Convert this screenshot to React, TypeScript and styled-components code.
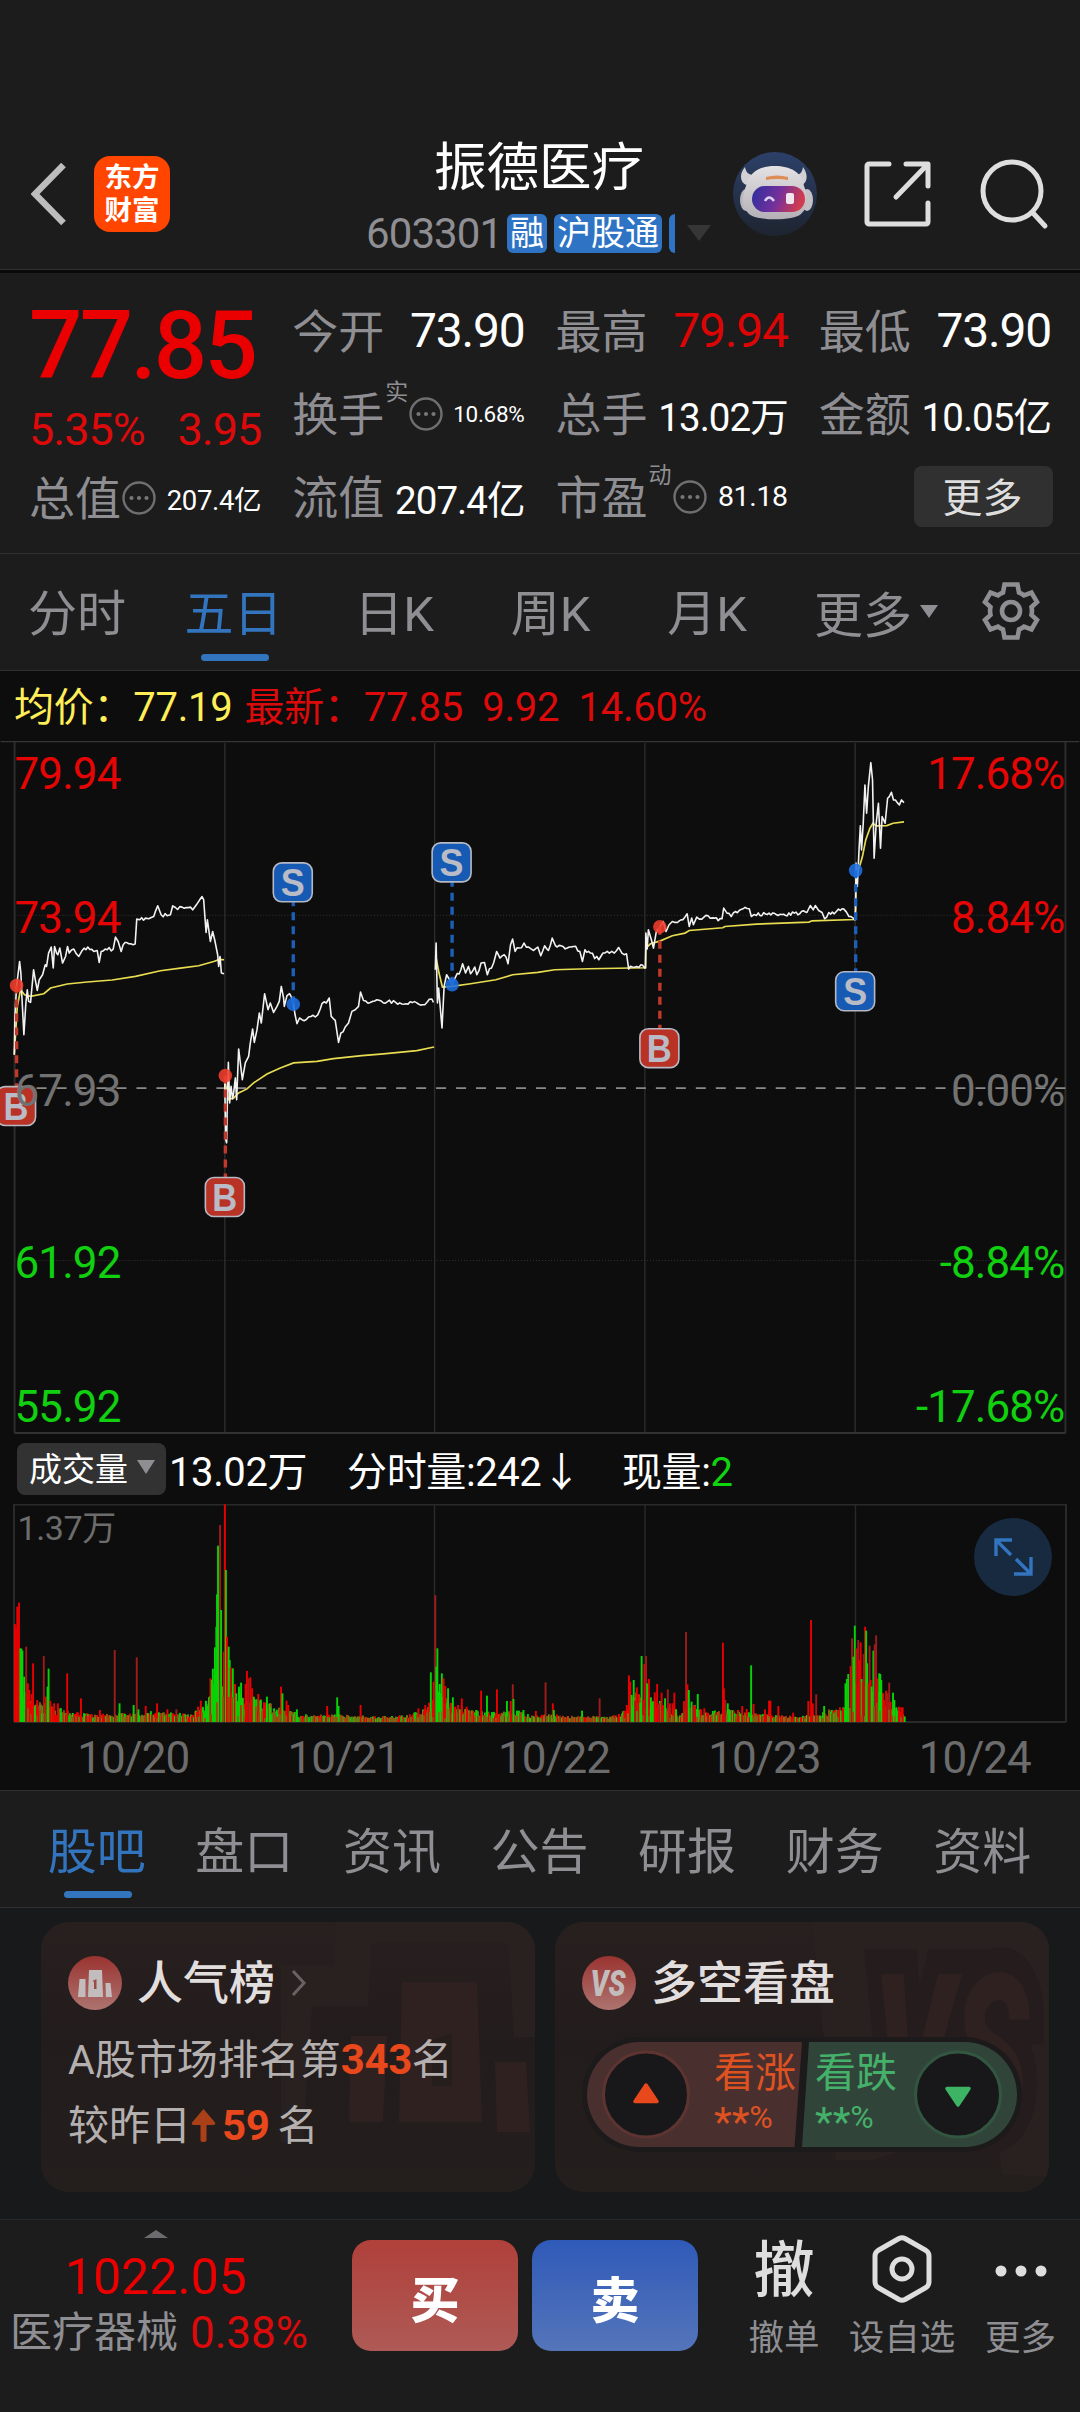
import React from 'react';
import styled, { createGlobalStyle } from 'styled-components';

const GlobalStyle = createGlobalStyle`
  * { box-sizing: border-box; }
  body { margin: 0; background: #1c1c1c; }
`;

const RED = '#ea0000';
const GREEN = '#0fd40f';
const GREY = '#8e8e93';
const BLUE = '#3274be';

const Page = styled.div`
  width: 1080px;
  height: 2412px;
  overflow: hidden;
  display: flex;
  flex-direction: column;
  background: #1c1c1c;
  font-family: Roboto, 'Noto Sans CJK SC', sans-serif;
  color: #fff;
  white-space: nowrap;
`;

/* ---------- header ---------- */

const Header = styled.header`
  height: 273px;
  padding-top: 118px;
  display: grid;
  grid-template-columns: 360px 360px 360px;
  border-bottom: 3px solid #0a0a0a;
  box-shadow: inset 0 -1px 0 #303030;
`;

const HeaderLeft = styled.div`
  display: flex;
  align-items: center;
  gap: 28px;
  height: 152px;
  padding-left: 31px;
`;

const HeaderRight = styled.div`
  display: flex;
  align-items: center;
  height: 152px;
  padding-left: 13px;
  gap: 47px;
`;

const AppLogo = styled.div`
  width: 76px;
  height: 76px;
  border-radius: 16px;
  background: #ff4500;
  display: flex;
  flex-direction: column;
  align-items: center;
  justify-content: center;
  font-size: 27.5px;
  font-weight: 700;
  line-height: 33px;
  padding-bottom: 1px;
`;

const HeaderCenter = styled.div`
  display: flex;
  flex-direction: column;
  align-items: center;
`;

const StockName = styled.div`
  font-size: 52.5px;
  line-height: 60px;
  margin: 20px 2px 0 0;
`;

const CodeRow = styled.div`
  display: flex;
  align-items: center;
  width: 348px;
  height: 40px;
  margin-top: 15px;
`;

const Code = styled.span`
  font-size: 42px;
  letter-spacing: -0.9px;
  color: ${GREY};
  width: 141px;
`;

const Tag = styled.span<{ $clip?: boolean }>`
  height: 39px;
  line-height: 38px;
  width: ${(p) => (p.$clip ? '6px' : 'auto')};
  padding: ${(p) => (p.$clip ? '0' : '0 3px')};
  border-radius: ${(p) => (p.$clip ? '6px 0 0 6px' : '6px')};
  margin-right: 7px;
  font-size: 34px;
  background: #2f74c4;
`;

const CodeCaret = styled.span`
  margin-left: 5px;
  border: 12px solid transparent;
  border-top: 16px solid #363636;
  border-bottom: 0;
`;

/* ---------- quote ---------- */

const Quote = styled.section`
  height: 281px;
  padding: 0 29px 0 29px;
  display: grid;
  grid-template-columns: repeat(4, minmax(0, 1fr));
  column-gap: 31px;
  border-bottom: 1px solid #303030;
`;

const QuoteCol = styled.div`
  display: flex;
  flex-direction: column;
  padding-top: 16px;
`;

const BigPrice = styled.div`
  height: 114px;
  line-height: 114px;
  font-size: 94px;
  font-weight: 500;
  letter-spacing: -2.7px;
  color: ${RED};
`;

const ChangeRow = styled.div`
  height: 52px;
  display: flex;
  justify-content: space-between;
  align-items: center;
  font-size: 45px;
  letter-spacing: -1px;
  color: #dc0a0a;
`;

const Cell = styled.div<{ $h?: number }>`
  height: ${(p) => p.$h ?? 83}px;
  display: flex;
  align-items: center;
`;

const Label = styled.span`
  font-size: 46px;
  padding-bottom: 6px;
  margin-right: 1px;
  color: ${GREY};
`;

const Sup = styled.sup`
  font-size: 23px;
  line-height: 24px;
  color: ${GREY};
  margin: 0 1px 41px 0;
  width: 23px;
`;

const Value = styled.span<{ $size: number; $color?: string }>`
  margin-left: auto;
  font-size: ${(p) => p.$size}px;
  letter-spacing: ${(p) => (p.$size > 30 ? '-0.025em' : '-0.012em')};
  color: ${(p) => p.$color ?? '#fff'};
`;

const MoreButton = styled.button`
  margin: 0 -2px 0 auto;
  width: 139px;
  height: 61px;
  border: 0;
  border-radius: 8px;
  background: #303030;
  color: #dedede;
  font: 40px Roboto, 'Noto Sans CJK SC', sans-serif;
  padding: 0 2px 4px 0;
`;

/* ---------- tab bars ---------- */

const PeriodBar = styled.nav`
  height: 117px;
  display: grid;
  grid-template-columns: 156px 157px 164px 149px 164px 290px;
  border-bottom: 1px solid #303030;
`;

const SectionBar = styled.nav`
  height: 118px;
  padding: 0 23px 0 24px;
  display: grid;
  grid-template-columns: repeat(7, 1fr);
  border-top: 1px solid #303030;
  border-bottom: 1px solid #303030;
`;

const TabItem = styled.div<{ $active?: boolean; $top: number }>`
  display: flex;
  flex-direction: column;
  align-items: center;
  padding-top: ${(p) => p.$top}px;
  font-size: 49px;
  line-height: 60px;
  color: ${(p) => (p.$active ? BLUE : GREY)};
  span { margin-right: 2px; }
  &::after {
    content: '';
    display: ${(p) => (p.$active ? 'block' : 'none')};
    width: 68px;
    height: 7px;
    margin-top: ${(p) => 40 - p.$top}px;
    border-radius: 4px;
    background: ${BLUE};
  }
`;

const MoreTab = styled.div`
  display: flex;
  align-items: center;
  padding: 0 0 2px 24px;
  font-size: 49px;
  color: ${GREY};
`;

const SmallCaret = styled.span<{ $up?: boolean; $w: number; $h: number; $color: string; $left?: number }>`
  margin-left: ${(p) => p.$left ?? 0}px;
  border: ${(p) => p.$w / 2}px solid transparent;
  border-top: ${(p) => (p.$up ? '0' : `${p.$h}px solid ${p.$color}`)};
  border-bottom: ${(p) => (p.$up ? `${p.$h}px solid ${p.$color}` : '0')};
`;

/* ---------- charts ---------- */

const ChartPanel = styled.section`
  height: 1119px;
  background: #0d0d0d;
  display: flex;
  flex-direction: column;
`;

const AvgRow = styled.div`
  height: 70px;
  padding: 0 0 3px 14px;
  display: flex;
  align-items: center;
  gap: 12px;
  font-size: 40px;
  letter-spacing: -0.25px;
  color: #dc0a0a;
  white-space: pre;
`;

const Avg = styled.span`
  color: #ffee58;
`;

const VolumeRow = styled.div`
  height: 70px;
  padding: 0 0 1px 17px;
  display: flex;
  align-items: center;
  font-size: 40px;
`;

const IndicatorButton = styled.div`
  width: 149px;
  height: 52px;
  margin-right: 3px;
  padding: 0 11px 3px 12px;
  border-radius: 8px;
  background: #323232;
  display: flex;
  align-items: center;
  justify-content: space-between;
  font-size: 33px;
`;

const Metric = styled.span<{ $gap: number }>`
  margin-left: ${(p) => p.$gap}px;
  letter-spacing: -0.4px;
  em { font-style: normal; color: ${GREEN}; }
`;

const VolumeBox = styled.div`
  position: relative;
  height: 220px;
`;

const ExpandButton = styled.div`
  position: absolute;
  left: 974px;
  top: 14px;
  width: 78px;
  height: 78px;
  border-radius: 50%;
  background: #172a40;
  display: grid;
  place-items: center;
`;

const Dates = styled.div`
  height: 66px;
  padding: 1px 0 0 28px;
  display: grid;
  grid-template-columns: repeat(5, 210.4px);
  align-items: center;
  text-align: center;
  font-size: 44px;
  letter-spacing: -1px;
  color: #6c6c6c;
`;

/* ---------- cards ---------- */

const Cards = styled.section`
  height: 311px;
  padding: 14px 31px 0 41px;
  display: flex;
  gap: 20px;
  background: #18191b;
`;

const Card = styled.article`
  position: relative;
  width: 494px;
  height: 270px;
  border-radius: 28px;
  overflow: hidden;
  background: linear-gradient(#28201f, #231c1c 45%, #241e1d);
`;

const Watermark = styled.svg`
  position: absolute;
  inset: 0;
`;

const CardBody = styled.div`
  position: relative;
  padding: 34px 27px 0;
`;

const CardTitle = styled.h3`
  margin: 0;
  height: 54px;
  display: flex;
  align-items: center;
  gap: 15px;
  font-size: 46px;
  font-weight: 500;
  line-height: 54px;
  color: #e2dede;
`;

const CardLine = styled.p<{ $top: number }>`
  margin: ${(p) => p.$top}px 0 0;
  height: 50px;
  display: flex;
  align-items: center;
  font-size: 41px;
  line-height: 50px;
  color: #b4b0b0;
`;

const Hot = styled.b<{ $after?: number }>`
  font-weight: 700;
  font-size: 42px;
  margin-right: ${(p) => p.$after ?? 0}px;
  letter-spacing: -0.4px;
  color: #e8481c;
`;

const Versus = styled.div`
  position: relative;
  width: 440px;
  height: 115px;
  margin-top: 27px;
`;

const VersusShape = styled.svg`
  position: absolute;
  inset: 0;
`;

const Votes = styled.div`
  position: relative;
  display: flex;
  gap: 19px;
  padding: 11px 0 0 132px;
`;

const Vote = styled.div<{ $color: string }>`
  width: 82px;
  color: ${(p) => p.$color};
  font-size: 41px;
  line-height: 50px;
`;

const Share = styled.div`
  display: flex;
  align-items: center;
  height: 38px;
  font-size: 32px;
  line-height: 38px;
`;

const Stars = styled.span`
  font-size: 41px;
  line-height: 38px;
  padding-top: 9px;
`;

/* ---------- bottom bar ---------- */

const BottomBar = styled.footer`
  height: 193px;
  display: flex;
  border-top: 1px solid #292a2d;
`;

const IndexBlock = styled.div`
  flex: none;
  width: 340px;
  padding: 10px 0 0 10px;
`;

const IndexTop = styled.div`
  width: 292px;
  display: flex;
  flex-direction: column;
  align-items: center;
  font-size: 50px;
  line-height: 60px;
  gap: 9px;
  color: ${RED};
`;

const IndexRow = styled.div`
  display: flex;
  gap: 12px;
  font-size: 42px;
  line-height: 52px;
  color: ${GREY};
  b { font-weight: 400; font-size: 44px; color: #dc0a0a; }
`;

const TradeButton = styled.div<{ $from: string; $to: string }>`
  flex: none;
  width: 166px;
  height: 111px;
  margin: 20px 14px 0 0;
  border-radius: 19px;
  background: linear-gradient(${(p) => p.$from}, ${(p) => p.$to});
  display: flex;
  align-items: center;
  justify-content: center;
  padding-top: 2px;
  font-size: 49px;
  font-weight: 900;
`;

const Action = styled.div<{ $w: number }>`
  flex: none;
  width: ${(p) => p.$w}px;
  display: flex;
  flex-direction: column;
  align-items: center;
  font-size: 35.5px;
  line-height: 40px;
  color: ${GREY};
`;

const ActionIcon = styled.div<{ $down?: number }>`
  height: 98px;
  padding-top: ${(p) => p.$down ?? 0}px;
  display: flex;
  align-items: center;
  font-size: 61px;
  font-weight: 500;
  color: #dedede;
`;

const Actions = styled.div`
  display: flex;
  margin-left: 12px;
`;

/* ---------- data ---------- */

type Pt = [number, number];

const left = (s: string): Pt[] =>
  s.split(' ').map((p) => {
    const [x, y] = p.split(',').map(Number);
    return [x / 3, 740 + y / 3];
  });
const right = (s: string): Pt[] =>
  s.split(' ').map((p) => {
    const [x, y] = p.split(',').map(Number);
    return [420 + x / 2.376, 740 + y / 3];
  });

const PRICE: Pt[][] = [
  left('41,945 43,830 48,740 54,690 57,665 61,700 64,770 70,885 76,790 80,750 84,785 90,788 99,690 104,720 110,752 116,720 126,705 134,675 138,680 144,640 152,622 158,685 162,620 168,640 172,645 178,625 186,670 195,650 201,620 206,640 220,628 235,650 245,632 262,622 280,635 290,632 296,668 302,635 320,630 338,628 345,592 353,605 362,635 368,615 385,612 404,613 409,538 418,540 435,535 445,537 460,530 472,498 482,525 500,528 510,525 517,498 525,503 545,502 570,502 577,510 588,495 598,480 605,470 610,480 617,578 621,540 630,605 637,575 643,600 652,645 655,680 659,650 663,700 671,702'),
  left('673,1010 676,1200 679,1210 681,1080 684,968 688,1090 692,1040 697,1078 700,1060 705,1015 709,1080 715,928 720,970 726,1020 735,970 745,950 750,910 757,868 762,908 770,870 777,820 783,850 793,762 803,810 810,790 820,818 830,800 837,785 843,740 850,775 852,800 860,768 868,762 879,790 890,852 898,835 905,840 925,832 945,832 960,808 965,792 978,790 987,775 993,830 1005,842 1015,908 1022,880 1035,862 1045,850 1055,815 1065,810 1075,800 1081,757 1090,782 1110,788 1130,780 1150,790 1180,783 1205,793 1230,786 1255,793 1280,788 1295,778 1300,788'),
  right('36,690 38,610 41,790 44,745 52,865 57,740 63,705 70,720 76,735 84,712 97,690 101,672 108,700 115,680 120,702 130,682 135,705 145,670 153,668 160,705 175,668 182,635 190,655 200,645 209,672 215,615 220,598 226,635 235,625 247,610 258,622 270,632 280,622 287,648 296,618 305,632 314,595 322,618 335,618 350,625 365,620 380,635 386,665 392,630 405,640 425,660 435,640 450,640 462,640 472,623 480,640 491,642 496,688 505,682 515,680 525,675 534,685 536,685 537,580 540,628 543,570 550,600 555,625 562,575 570,562 578,545 585,575 592,555 600,545 612,548 625,540 635,522 640,560 646,535 650,555 658,532 670,538 685,528 700,535 718,537 722,505 730,520 740,530 750,515 768,507 783,507 788,530 800,527 830,520 860,524 890,520 920,518 928,497 935,510 940,497 948,512 956,518 962,537 972,518 985,522 995,508 1008,508 1020,530 1030,535 1034,540 1036,510 1037,370 1040,440 1044,330 1047,258 1050,330 1054,250 1058,135 1062,220 1066,140 1072,68 1076,120 1080,355 1085,250 1090,190 1095,325 1099,230 1106,250 1112,175 1116,170 1121,157 1126,180 1135,188 1140,195 1145,180 1151,188'),
];

const AVERAGE: Pt[][] = [
  left('41,945 50,800 60,750 72,765 90,770 130,762 150,745 200,733 260,727 335,721 405,710 480,693 540,685 595,678 640,665 658,659 671,660'),
  left('675,1030 684,1080 700,1075 715,1060 740,1048 760,1030 800,1003 840,985 880,970 950,965 1000,957 1085,948 1150,943 1250,933 1302,922'),
  right('38,655 45,700 53,742 75,740 120,732 180,720 220,705 280,698 320,690 400,687 536,684 537,625 548,612 570,604 600,588 630,580 640,572 720,564 725,560 800,553 925,547 932,543 1035,539 1037,420 1044,385 1052,350 1060,300 1070,265 1077,250 1085,258 1110,257 1125,250 1151,246'),
];

const random = (seed: number) => () => {
  seed = (seed * 1664525 + 1013904223) % 4294967296;
  return seed / 4294967296;
};

const withTicks = (pts: Pt[], seed: number): Pt[] => {
  const rnd = random(seed);
  const out: Pt[] = [];
  pts.forEach(([x, y], i) => {
    out.push([x, y]);
    const next = pts[i + 1];
    if (!next) return;
    const n = Math.floor((next[0] - x) / 1.7);
    for (let k = 1; k < n; k++) {
      const t = k / n;
      out.push([x + (next[0] - x) * t, y + (next[1] - y) * t + (rnd() - 0.5) * 4.4]);
    }
  });
  return out;
};

const toPath = (pts: Pt[]) => 'M' + pts.map(([x, y]) => `${x.toFixed(1)} ${y.toFixed(1)}`).join('L');

const GRID_X = [224.5, 434.5, 645, 855.5];

type Trade = { kind: 'B' | 'S'; x: number; y: number; dotX: number; dotY: number };
const TRADES: Trade[] = [
  { kind: 'B', x: 15.5, y: 1106.5, dotX: 16, dotY: 985.7 },
  { kind: 'B', x: 224.5, y: 1197.5, dotX: 225, dotY: 1076 },
  { kind: 'S', x: 292.5, y: 882.5, dotX: 293, dotY: 1004.5 },
  { kind: 'S', x: 451.5, y: 862.5, dotX: 452, dotY: 985 },
  { kind: 'B', x: 659.5, y: 1048.5, dotX: 660, dotY: 927 },
  { kind: 'S', x: 855.5, y: 991.5, dotX: 856, dotY: 870.5 },
];

const AXIS = [
  { y: 789, price: '79.94', pct: '17.68%', color: '#e60505' },
  { y: 933, price: '73.94', pct: '8.84%', color: '#e60505' },
  { y: 1106, price: '67.93', pct: '0.00%', color: '#727272' },
  { y: 1279, price: '61.92', pct: '-8.84%', color: '#10d010' },
  { y: 1422.5, price: '55.92', pct: '-17.68%', color: '#10d010' },
];

/* x, top, tone (r red, d dark red, g green) */
const SPIKES_A =
  '43,732,r 46,745,r 50,680,r 55,668,r 59,805,g 62,806,g 65,812,g 70,890,g 76,800,d 81,910,r 85,930,r 92,942,r 96,850,r 101,980,g 108,960,r 127,828,d 133,950,r 138,920,g 141,866,g 146,962,r 157,970,r 168,970,r 195,880,r 235,955,r 290,990,r 333,810,d 347,970,g 388,975,g 397,832,d 402,988,g 423,978,r 456,970,r 486,988,r 512,988,d 575,980,r 583,962,r 590,990,g 600,972,g 606,962,g 611,895,r 615,900,g 618,866,g 624,802,g 628,740,g 630,643,g 633,497,g 639,435,d 642,690,g 650,815,r 653,373,r 656,570,g 659,770,r 664,800,g 667,840,g 670,862,r 676,865,g 682,912,r 686,940,g 694,920,g 700,908,g 704,955,g 713,912,r 717,873,r 722,895,d 727,892,r 732,925,r 737,950,g 750,942,r 757,960,g 768,975,r 775,950,g 785,982,g 796,985,g 816,920,r 820,940,g 832,962,r 837,975,r 862,988,g 950,978,r 979,952,g 983,978,g 1047,975,r 1215,985,r 1235,975,r 1246,968,r 1251,877,g 1259,905,r 1264,646,d 1267,860,g 1270,805,g 1273,935,g 1277,912,g 1283,880,g 1288,895,r 1293,918,r 1301,925,g 1308,970,r 1315,952,g 1322,980,r 1330,975,r 1341,955,r 1355,980,r 1384,990,g 1397,932,r 1414,947,g 1443,928,r 1472,963,g 1483,963,r 1489,913,d 1491,957,g 1520,990,g 1556,993,r';
const SPIKES_B =
  '16,907,d 37,970,r 40,990,g 122,992,g 173,955,d 252,975,r 258,886,r 262,905,r 266,945,g 272,900,g 276,962,d 281,922,r 286,942,r 291,968,g 295,828,g 299,960,d 303,852,r 308,828,d 311,910,g 316,897,r 322,952,g 328,965,g 333,937,r 340,912,r 346,970,d 353,938,r 358,975,r 363,955,g 371,928,d 377,970,r 385,970,r 390,938,r 395,988,g 418,963,r 424,756,d 428,913,r 432,930,g 440,965,g 445,975,d 450,978,r 458,942,g 477,985,r 502,993,g 531,788,r 534,925,r 538,960,d 545,970,g 575,990,r 587,978,r 600,987,r 613,856,g 620,972,r 653,988,r 665,962,r 669,962,r 692,978,r 735,998,r 779,963,r 787,720,r 792,970,r 802,943,d 825,978,g 856,990,r 865,990,r 880,985,r 887,910,g 891,897,g 895,882,g 902,858,r 906,775,d 910,830,g 914,737,g 919,805,r 924,780,d 928,840,r 931,787,r 934,897,g 937,905,r 940,822,d 944,740,r 947,752,g 950,850,g 954,910,r 957,797,d 960,900,r 963,920,g 968,812,g 972,793,d 976,766,d 980,895,r 985,880,g 988,882,g 991,900,g 999,960,r 1005,932,r 1009,940,d 1014,908,d 1018,965,r 1025,938,g 1029,960,g 1035,982,g 1042,980,r 1049,982,r 1053,982,r 1059,1010,g';

const TONES: Record<string, string> = { r: '#ea0000', d: '#a01c1c', g: '#06d406' };
const MIXED = ['#ea0000', '#06d406', '#8a5a10', '#a8400c', '#6f7a14', '#ea0000', '#06c806'];

/* typical bar height of quiet minutes, by x */
const BASE: Pt[] = [
  [14, 60], [24, 34], [34, 20], [60, 12], [80, 7], [130, 7], [150, 9], [190, 7], [203, 14], [212, 40], [222, 60], [232, 40],
  [245, 28], [262, 20], [285, 10], [310, 5], [330, 6], [350, 5], [380, 4], [410, 6], [428, 14], [438, 32], [448, 20], [470, 10],
  [500, 8], [512, 12], [530, 5], [550, 6], [580, 4], [610, 4], [626, 12], [632, 28], [645, 32], [660, 20], [680, 8], [690, 18],
  [705, 8], [725, 12], [745, 8], [780, 5], [800, 4], [820, 8], [845, 16], [852, 40], [870, 46], [882, 30], [892, 16], [905, 3],
];

const baseAt = (x: number) => {
  const i = BASE.findIndex(([bx]) => bx > x);
  if (i <= 0) return BASE[0][1];
  const [x0, h0] = BASE[i - 1];
  const [x1, h1] = BASE[i];
  return h0 + ((h1 - h0) * (x - x0)) / (x1 - x0);
};

type Bar = { x: number; h: number; fill: string };

const buildBars = (): Bar[] => {
  const rnd = random(77);
  const bars: Bar[] = [];
  for (let x = 14; x < 904; x += 1) {
    const h = 2 + baseAt(x) * (0.3 + rnd() * 0.7);
    const calm = x > 200 && x < 221 ? 1 : Math.floor(rnd() * MIXED.length);
    bars.push({ x, h, fill: MIXED[calm] });
  }
  const add = (src: string, ox: number) =>
    src.split(' ').forEach((s) => {
      const [px, top, tone] = s.split(',');
      bars.push({ x: ox + Number(px) / 2.904 - 0.9, h: (1026 - Number(top)) / 3, fill: TONES[tone] });
    });
  add(SPIKES_A, 0);
  add(SPIKES_B, 540);
  for (let x = 15; x < 903; x += 3) {
    if (rnd() > 0.45) bars.push({ x, h: 2 + baseAt(x) * 0.55 * rnd() + 1, fill: MIXED[2 + Math.floor(rnd() * 3)] });
  }
  return bars;
};

const BARS = buildBars();

/* ---------- drawings ---------- */

const BackIcon = () => (
  <svg width="35" height="64" viewBox="0 0 35 64">
    <path d="M32.500 3L4 32l28.500 29" fill="none" stroke="#bdbdbd" strokeWidth="6.500" />
  </svg>
);

const Robot = () => (
  <svg width="84" height="84" viewBox="0 0 84 84">
    <defs>
      <linearGradient id="sky" x1="0" y1="0" x2="0" y2="1">
        <stop offset="0" stopColor="#2c4068" />
        <stop offset="1" stopColor="#1e2430" />
      </linearGradient>
      <linearGradient id="visor" x1="0" y1="0" x2="1" y2="0.2">
        <stop offset="0" stopColor="#2b2f9e" />
        <stop offset="0.55" stopColor="#74309c" />
        <stop offset="1" stopColor="#d03c50" />
      </linearGradient>
      <linearGradient id="shell" x1="0" y1="0" x2="0" y2="1">
        <stop offset="0" stopColor="#e4e2e4" />
        <stop offset="1" stopColor="#b4b0b6" />
      </linearGradient>
    </defs>
    <circle cx="42" cy="42" r="42" fill="url(#sky)" />
    <path d="M12 15C6 22 7 30 13 33l8-10c-5 0-8-2-9-8zM70 15c5 7 5 15-1 18l-8-10c6 0 8-2 9-8z" fill="#d2d0d4" />
    <ellipse cx="13" cy="48" rx="6" ry="11" fill="#b9b6bc" />
    <ellipse cx="74" cy="48" rx="6" ry="11" fill="#c4c1c6" />
    <path d="M13 34C16 20 27 14 42 14s27 6 29 20c5 12 4 22-3 28-7 7-45 7-52 0-7-6-8-16-3-28z" fill="url(#shell)" />
    <rect x="19" y="34" width="53" height="26" rx="13" fill="url(#visor)" />
    <path d="M33 25q11-3 22 0v3q-11-2-22 0z" fill="#dd8d55" />
    <path d="M32 49q4-7 9 0" fill="none" stroke="#d8d2f0" strokeWidth="2.500" />
    <rect x="53" y="41" width="8" height="11" rx="2" fill="#efe6ee" />
  </svg>
);

const ShareIcon = () => (
  <svg width="68" height="68" viewBox="0 0 68 68" fill="none" stroke="#dedede" strokeWidth="5" strokeLinecap="round" strokeLinejoin="round">
    <path d="M25 4H5a2 2 0 0 0-2 2v56a2 2 0 0 0 2 2h57a2 2 0 0 0 2-2V43" />
    <path d="M42 4h22v22M63 5L32 37" />
  </svg>
);

const SearchIcon = () => (
  <svg width="70" height="72" viewBox="0 0 70 72" fill="none" stroke="#dedede" strokeWidth="5" strokeLinecap="round">
    <circle cx="33" cy="33" r="29" />
    <path d="M54 55l12 13" />
  </svg>
);

const DotsCircle = () => (
  <svg width="35" height="34" viewBox="0 0 35 34">
    <circle cx="17" cy="17" r="15.500" fill="none" stroke="#6f6f72" strokeWidth="2.400" />
    <circle cx="9.500" cy="17" r="2.100" fill="#77777a" />
    <circle cx="17" cy="17" r="2.100" fill="#77777a" />
    <circle cx="24.500" cy="17" r="2.100" fill="#77777a" />
  </svg>
);

const GearIcon = () => (
  <svg width="60" height="60" viewBox="-30 -30 60 60" fill="none" stroke={GREY} strokeWidth="4.600">
    <path d="M-6.500-26.500H6.500L8-18.500A19 19 0 0 1 13-15.600L20.500-18.500L26-9L20.500-4A19 19 0 0 1 20.500 4L26 9L20.500 18.500L13 15.600A19 19 0 0 1 8 18.500L6.500 26.500H-6.500L-8 18.500A19 19 0 0 1-13 15.600L-20.500 18.500L-26 9L-20.500 4A19 19 0 0 1-20.500-4L-26-9L-20.500-18.500L-13-15.600A19 19 0 0 1-8-18.500Z" />
    <circle r="9" />
  </svg>
);

const GearSlot = styled.div`
  margin-left: 43px;
  height: 60px;
`;

const TradeMark = ({ t }: { t: Trade }) => {
  const buy = t.kind === 'B';
  const edge = t.y > t.dotY ? t.y - 20 : t.y + 20;
  return (
    <g>
      <line x1={t.dotX} x2={t.dotX} y1={t.dotY} y2={edge} stroke={buy ? '#c0392b' : '#1c5fb8'} strokeWidth="3.400" strokeDasharray="8 6" />
      <circle cx={t.dotX} cy={t.dotY} r="6.800" fill={buy ? '#f03c2c' : '#1e70e0'} opacity="0.88" />
      <rect x={t.x - 19.5} y={t.y - 19.5} width="39" height="39" rx="8.500" fill={buy ? '#b93226' : '#175ab4'} stroke="#b6b9c4" strokeWidth="1.600" />
      <text x={t.x} y={t.y + 14} textAnchor="middle" fontSize="38" fontWeight="700" fill="#b9bcc6" fontFamily="'Liberation Sans', Arial, sans-serif" textLength={buy ? 25 : 24} lengthAdjust="spacingAndGlyphs">
        {t.kind}
      </text>
    </g>
  );
};

const PriceChart = () => (
  <svg width="1080" height="694" viewBox="0 741 1080 694">
    <g stroke="#2c2c2c" strokeWidth="1.400" fill="none">
      <path d="M0 741.500H1080" stroke="#363636" />
      <path d="M14 742V1434M1066 742V1434" strokeWidth="2" />
      {GRID_X.map((x) => (
        <path key={x} d={`M${x} 743V1434`} />
      ))}
      <path d="M14 1433.800H1066" strokeWidth="2" stroke="#323232" />
      <path d="M14 915.500H1066M14 1261H1066" strokeDasharray="1 2" stroke="#343434" strokeWidth="1" />
    </g>
    <path d="M14 1088.500H1066" stroke="#8a8a8a" strokeWidth="1.600" strokeDasharray="10 10" strokeDashoffset="-2" />
    {AVERAGE.map((pts, i) => (
      <path key={i} d={toPath(pts)} fill="none" stroke="#e8dc50" strokeWidth="1.700" />
    ))}
    {PRICE.map((pts, i) => (
      <path key={i} d={toPath(withTicks(pts, i + 5))} fill="none" stroke="#f2f2f2" strokeWidth="1.600" strokeLinejoin="round" />
    ))}
    {TRADES.map((t) => (
      <TradeMark key={t.x} t={t} />
    ))}
    {AXIS.map((a) => (
      <g key={a.price} fill={a.color} fontSize="44" letterSpacing="-0.9">
        <text x="14" y={a.y}>{a.price}</text>
        <text x="1065" y={a.y} textAnchor="end">{a.pct}</text>
      </g>
    ))}
  </svg>
);

const VolumeChart = () => (
  <svg width="1080" height="220" viewBox="0 1504 1080 220">
    <g stroke="#2a2a2a" strokeWidth="1.400" fill="none">
      <path d="M14 1504.700H1066" />
      <path d="M14 1504V1722M1066 1504V1722M14 1722H1066" strokeWidth="2" />
      {GRID_X.map((x) => (
        <path key={x} d={`M${x} 1504V1722`} />
      ))}
    </g>
    {BARS.map((b, i) => (
      <rect key={i} x={b.x} y={1722 - b.h} width="1.900" height={b.h} fill={b.fill} />
    ))}
    <text x="17.500" y="1540" fontSize="34" letterSpacing="-0.4" fill="#6c6c6c">1.37万</text>
  </svg>
);

const ExpandIcon = () => (
  <svg width="40" height="40" viewBox="0 0 40 40" fill="none" stroke={BLUE} strokeWidth="3.400">
    <path d="M19 3H3v16M4 4l14 14M21 37h17V20M37 36L23 22" />
  </svg>
);

const PodiumBadge = () => (
  <svg width="54" height="54" viewBox="0 0 54 54">
    <defs>
      <linearGradient id="badge" x1="0" y1="0" x2="0" y2="1">
        <stop offset="0" stopColor="#9a3330" />
        <stop offset="1" stopColor="#ad7470" />
      </linearGradient>
    </defs>
    <circle cx="27" cy="27" r="27" fill="url(#badge)" />
    <path d="M11.500 23h6v18h-7.500zM21 14h13l1 27H20zM37.500 27h5l1.500 14h-6z" fill="#c2bcbc" />
    <path d="M24.500 25l4-2v10h-2.500v-7z" fill="#9a4a48" />
  </svg>
);

const VsBadge = () => (
  <svg width="54" height="54" viewBox="0 0 54 54">
    <circle cx="27" cy="27" r="27" fill="url(#badge)" />
    <text x="26" y="40" textAnchor="middle" fontSize="36" fontWeight="900" fontStyle="italic" fill="#c2bcbc" textLength="35" lengthAdjust="spacingAndGlyphs">VS</text>
  </svg>
);

const ArrowSlot = styled.span`
  display: flex;
  margin: 0 -1px 0 -6px;
`;

const UpArrow = () => (
  <ArrowSlot>
    <svg width="38" height="36" viewBox="0 0 38 36">
      <path d="M18.500 1L30 14.500Q31 17 28 17H21.500V32Q21.500 34 18.500 34Q15.500 34 15.500 32V17H9Q6 17 7 14.500Z" fill="#aa4018" />
    </svg>
  </ArrowSlot>
);

const HexIcon = () => (
  <svg width="62" height="68" viewBox="0 0 62 68" fill="none" stroke="#dedede" strokeWidth="5" strokeLinejoin="round">
    <path d="M28 3.500Q31 2 34 3.500L55 15.500Q58 17.500 58 21V47Q58 50.500 55 52.500L34 64.500Q31 66 28 64.500L7 52.500Q4 50.500 4 47V21Q4 17.500 7 15.500Z" />
    <circle cx="31" cy="34" r="10" />
  </svg>
);

const MoreDots = () => (
  <svg width="52" height="12" viewBox="0 0 52 12" fill="#dedede">
    <circle cx="6" cy="6" r="5.500" />
    <circle cx="26" cy="6" r="5.500" />
    <circle cx="46" cy="6" r="5.500" />
  </svg>
);

const SECTIONS = ['股吧', '盘口', '资讯', '公告', '研报', '财务', '资料'];
const DATES = ['10/20', '10/21', '10/22', '10/23', '10/24'];
const PERIODS = ['分时', '五日', '日K', '周K', '月K'];

export default function App() {
  return (
    <Page>
      <GlobalStyle />
      <Header>
        <HeaderLeft>
          <BackIcon />
          <AppLogo>
            <span>东方</span>
            <span>财富</span>
          </AppLogo>
        </HeaderLeft>
        <HeaderCenter>
          <StockName>振德医疗</StockName>
          <CodeRow>
            <Code>603301</Code>
            <Tag>融</Tag>
            <Tag>沪股通</Tag>
            <Tag $clip />
            <CodeCaret />
          </CodeRow>
        </HeaderCenter>
        <HeaderRight>
          <Robot />
          <ShareIcon />
          <SearchIcon />
        </HeaderRight>
      </Header>

      <Quote>
        <QuoteCol>
          <BigPrice>77.85</BigPrice>
          <ChangeRow>
            <span>5.35%</span>
            <span>3.95</span>
          </ChangeRow>
          <Cell $h={86}>
            <Label>总值</Label>
            <DotsCircle />
            <Value $size={27.5}>207.4亿</Value>
          </Cell>
        </QuoteCol>
        <QuoteCol>
          <Cell>
            <Label>今开</Label>
            <Value $size={48}>73.90</Value>
          </Cell>
          <Cell>
            <Label>换手</Label>
            <Sup>实</Sup>
            <DotsCircle />
            <Value $size={22.5}>10.68%</Value>
          </Cell>
          <Cell>
            <Label>流值</Label>
            <Value $size={38.5}>207.4亿</Value>
          </Cell>
        </QuoteCol>
        <QuoteCol>
          <Cell>
            <Label>最高</Label>
            <Value $size={48} $color="#dc0505">79.94</Value>
          </Cell>
          <Cell>
            <Label>总手</Label>
            <Value $size={38.5}>13.02万</Value>
          </Cell>
          <Cell>
            <Label>市盈</Label>
            <Sup>动</Sup>
            <DotsCircle />
            <Value $size={28.5}>81.18</Value>
          </Cell>
        </QuoteCol>
        <QuoteCol>
          <Cell>
            <Label>最低</Label>
            <Value $size={48}>73.90</Value>
          </Cell>
          <Cell>
            <Label>金额</Label>
            <Value $size={38.5}>10.05亿</Value>
          </Cell>
          <Cell>
            <MoreButton>更多</MoreButton>
          </Cell>
        </QuoteCol>
      </Quote>

      <PeriodBar>
        {PERIODS.map((p) => (
          <TabItem key={p} $top={31} $active={p === '五日'}>
            <span>{p}</span>
          </TabItem>
        ))}
        <MoreTab>
          更多
          <SmallCaret $w={18} $h={13} $color={GREY} $left={8} />
          <GearSlot>
            <GearIcon />
          </GearSlot>
        </MoreTab>
      </PeriodBar>

      <ChartPanel>
        <AvgRow>
          <Avg>均价：77.19</Avg>
          <span>{'最新：77.85  9.92  14.60%'}</span>
        </AvgRow>
        <PriceChart />
        <VolumeRow>
          <IndicatorButton>
            成交量
            <SmallCaret $w={18} $h={14} $color={GREY} />
          </IndicatorButton>
          <Metric $gap={0}>13.02万</Metric>
          <Metric $gap={40}>分时量:242↓</Metric>
          <Metric $gap={41}>现量:<em>2</em></Metric>
        </VolumeRow>
        <VolumeBox>
          <VolumeChart />
          <ExpandButton>
            <ExpandIcon />
          </ExpandButton>
        </VolumeBox>
        <Dates>
          {DATES.map((d) => (
            <span key={d}>{d}</span>
          ))}
        </Dates>
      </ChartPanel>

      <SectionBar>
        {SECTIONS.map((s, i) => (
          <TabItem key={s} $top={32} $active={i === 0}>
            <span>{s}</span>
          </TabItem>
        ))}
      </SectionBar>

      <Cards>
        <Card>
          <Watermark width="494" height="270" viewBox="0 0 494 270">
            <path d="M295 0H494V115H473L467 20H331L327 84H271L262 220H240V43H293Z" fill="#292120" />
            <path d="M361 60H436L441 200H358ZM310 114H346L342 200H308ZM454 140H485L489 210H456Z" fill="#302121" />
            <path d="M382 120L411 112V164H391V128H382Z" fill="#261d1d" />
          </Watermark>
          <CardBody>
            <CardTitle>
              <PodiumBadge />
              人气榜
              <svg width="18" height="28" viewBox="0 0 18 28">
                <path d="M3 2l11 12L3 26" fill="none" stroke="#6a6262" strokeWidth="3" />
              </svg>
            </CardTitle>
            <CardLine $top={25}>
              A股市场排名第<Hot>343</Hot>名
            </CardLine>
            <CardLine $top={16}>
              较昨日
              <UpArrow />
              <Hot $after={8}>59</Hot>名
            </CardLine>
          </CardBody>
        </Card>
        <Card>
          <Watermark width="494" height="270" viewBox="0 0 494 270">
            <path d="M257 0H494V255L447 252L440 200L318 238H281Z" fill="#292120" />
            <text
              x="318"
              y="205"
              fontSize="215"
              fontWeight="900"
              fontStyle="italic"
              textLength="156"
              lengthAdjust="spacingAndGlyphs"
              fill="#302121"
              stroke="#251d1d"
              strokeWidth="50"
              paintOrder="stroke"
            >
              VS
            </text>
          </Watermark>
          <CardBody>
            <CardTitle>
              <VsBadge />
              多空看盘
            </CardTitle>
            <Versus>
              <VersusShape width="440" height="115" viewBox="0 0 440 115">
                <rect width="440" height="115" rx="57.500" fill="#1c1a1b" />
                <path d="M57.500 5H220L212.500 110H57.500A52.500 52.500 0 0 1 57.500 5Z" fill="#49302f" />
                <path d="M227 5H382.500A52.500 52.500 0 0 1 382.500 110H220Z" fill="#31443a" />
                <circle cx="64" cy="57.500" r="42.500" fill="#18181a" stroke="#5e3431" strokeWidth="3" />
                <circle cx="376" cy="57.500" r="42.500" fill="#18181a" stroke="#335641" strokeWidth="3" />
                <path d="M64 48L75 64.500H53Z" fill="#e8481c" stroke="#e8481c" strokeWidth="3.500" strokeLinejoin="round" />
                <path d="M376 68L387 51.500H365Z" fill="#3cb464" stroke="#3cb464" strokeWidth="3.500" strokeLinejoin="round" />
              </VersusShape>
              <Votes>
                <Vote $color="#de5222">
                  看涨
                  <Share>
                    <Stars>**</Stars>%
                  </Share>
                </Vote>
                <Vote $color="#44b06a">
                  看跌
                  <Share>
                    <Stars>**</Stars>%
                  </Share>
                </Vote>
              </Votes>
            </Versus>
          </CardBody>
        </Card>
      </Cards>

      <BottomBar>
        <IndexBlock>
          <IndexTop>
            <SmallCaret $up $w={24} $h={8} $color="#6c6c70" />
            1022.05
          </IndexTop>
          <IndexRow>
            医疗器械<b>0.38%</b>
          </IndexRow>
        </IndexBlock>
        <Actions>
          <TradeButton $from="#b0403a" $to="#ae5a56">买</TradeButton>
          <TradeButton $from="#2f5ab8" $to="#5575ba">卖</TradeButton>
          <Action $w={144}>
            <ActionIcon $down={4}>撤</ActionIcon>
            撤单
          </Action>
          <Action $w={92}>
            <ActionIcon>
              <HexIcon />
            </ActionIcon>
            设自选
          </Action>
          <Action $w={145}>
            <ActionIcon $down={3}>
              <MoreDots />
            </ActionIcon>
            更多
          </Action>
        </Actions>
      </BottomBar>
    </Page>
  );
}
